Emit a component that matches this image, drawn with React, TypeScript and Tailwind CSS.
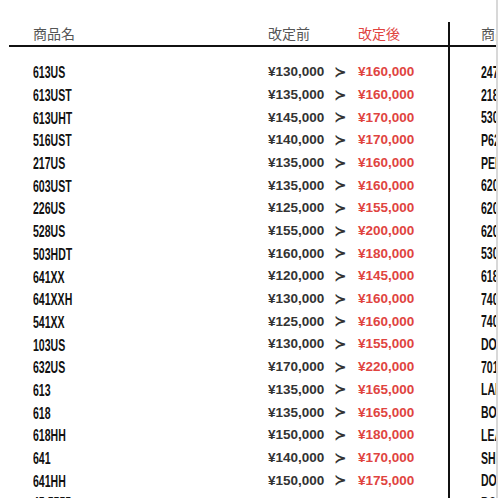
const rows: [string, string, string][] = [
  ['613US', '¥130,000', '¥160,000'],
  ['613UST', '¥135,000', '¥160,000'],
  ['613UHT', '¥145,000', '¥170,000'],
  ['516UST', '¥140,000', '¥170,000'],
  ['217US', '¥135,000', '¥160,000'],
  ['603UST', '¥135,000', '¥160,000'],
  ['226US', '¥125,000', '¥155,000'],
  ['528US', '¥155,000', '¥200,000'],
  ['503HDT', '¥160,000', '¥180,000'],
  ['641XX', '¥120,000', '¥145,000'],
  ['641XXH', '¥130,000', '¥160,000'],
  ['541XX', '¥125,000', '¥160,000'],
  ['103US', '¥130,000', '¥155,000'],
  ['632US', '¥170,000', '¥220,000'],
  ['613', '¥135,000', '¥165,000'],
  ['618', '¥135,000', '¥165,000'],
  ['618HH', '¥150,000', '¥180,000'],
  ['641', '¥140,000', '¥170,000'],
  ['641HH', '¥150,000', '¥175,000'],
  ['45 5555', '¥150,000', '¥180,000'],
];

const rightNames = [
  '247US', '218US', '530UST', 'P625', 'PERRY', '620US', '620UST', '620UHT', '530HDT', '618XX',
  '740XX', '740XXH', 'DOUBLE', '701US', 'LAMB', 'BOWLING', 'LEATHER', 'SHELL', 'DOUBLE H', 'BOOTS',
];

// condensed bold look for the model names
const nameCls =
  "inline-block origin-left scale-x-[0.62] whitespace-nowrap leading-none font-['Liberation_Sans',Arial,sans-serif] font-bold text-[17px] text-[#111]";

export default function App() {
  return (
    <div className="relative w-[498px] h-[498px] overflow-hidden bg-white">
      <div className="flex flex-col pt-[22px]">
        {/* header */}
        <div className="flex h-[23px]">
          <div className="w-[448px] shrink-0 flex items-center pl-[33px] text-[14px] text-[#555] font-['Noto_Sans_CJK_JP',sans-serif]">
            <div className="w-[235px] shrink-0">商品名</div>
            <div className="w-[90px] shrink-0">改定前</div>
            <div className="text-[#e0443f]">改定後</div>
          </div>
          <div className="w-[2px] shrink-0 bg-[#111]" />
          <div className="flex-1 flex items-center pl-[31px] text-[14px] text-[#555] font-['Noto_Sans_CJK_JP',sans-serif] whitespace-nowrap overflow-hidden">
            商品名
          </div>
        </div>
        <div className="ml-[9px] h-[2px] bg-[#111]" />
        {/* body */}
        <div className="flex h-[460px]">
          <div className="w-[448px] shrink-0 pt-[14px] pl-[33px]">
            {rows.map(([name, before, after]) => (
              <div key={name} className="flex items-center h-[22.7px]">
                <div className="w-[235px] shrink-0">
                  <span className={nameCls}>{name}</span>
                </div>
                <div className="w-[66px] shrink-0 font-['Liberation_Sans',Arial,sans-serif] font-bold text-[13.5px] text-[#333]">
                  {before}
                </div>
                <div className="w-[24px] shrink-0 text-[15px] font-bold leading-none text-[#333] font-['DejaVu_Sans',sans-serif]">
                  ≻
                </div>
                <div className="font-['Liberation_Sans',Arial,sans-serif] font-bold text-[13.5px] text-[#e0443f]">
                  {after}
                </div>
              </div>
            ))}
          </div>
          <div className="w-[2px] shrink-0 bg-[#111]" />
          <div className="flex-1 pt-[14px] pl-[31px] overflow-hidden">
            {rightNames.map((n) => (
              <div key={n} className="flex items-center h-[22.7px]">
                <span className={nameCls}>{n}</span>
              </div>
            ))}
          </div>
        </div>
      </div>
      <div className="absolute top-0 right-0 w-[2px] h-full bg-[#d8d8d8]" />
    </div>
  );
}
